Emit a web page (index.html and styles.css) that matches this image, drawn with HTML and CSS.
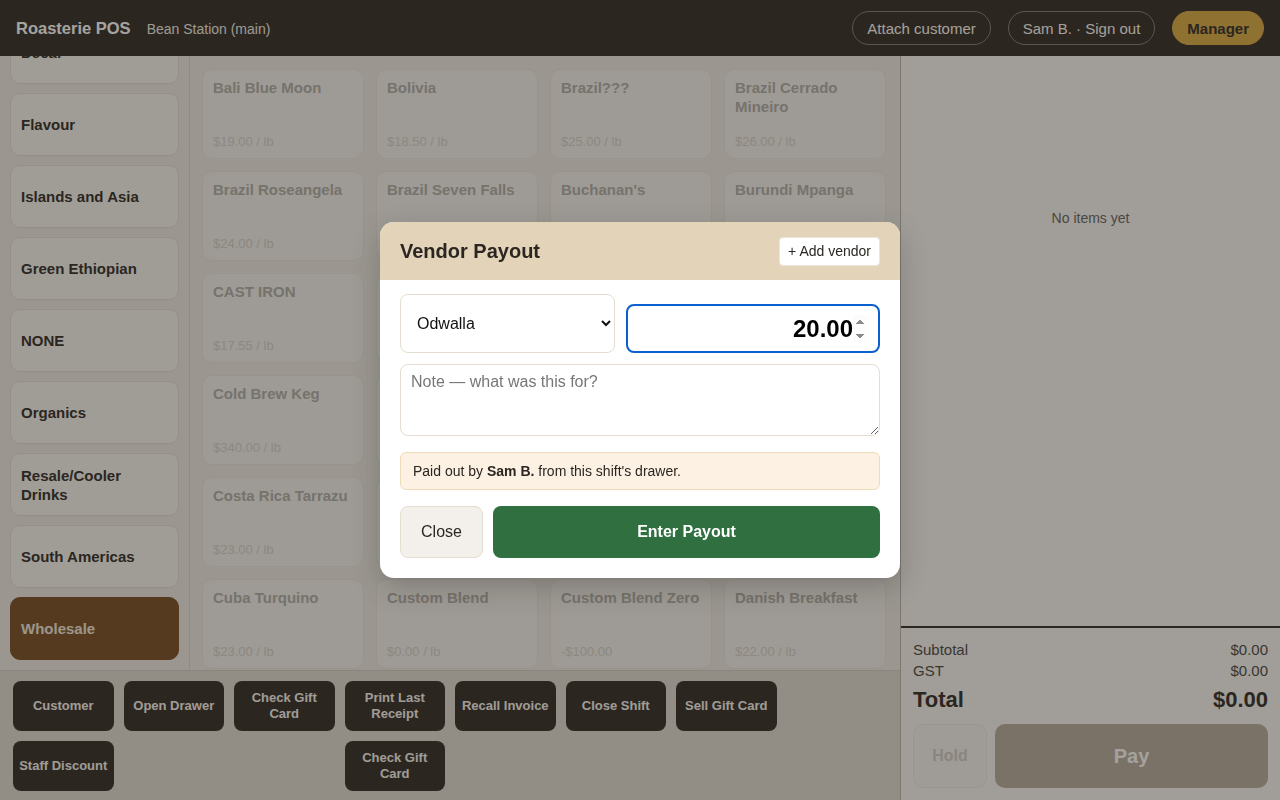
FILE: index.html
```html
<!DOCTYPE html>
<html lang="en">

<head>
    <meta charset="UTF-8">
    <meta name="viewport" content="width=device-width, initial-scale=1.0">
    <title>Roasterie POS</title>
    <link rel="stylesheet" href="styles.css">
</head>

<body>
    <header class="topbar">
        <div class="brand">
            <span class="brand-name">Roasterie POS</span>
            <span class="brand-store">Bean Station (main)</span>
        </div>
        <div class="topbar-actions">
            <button class="pill">Attach customer</button>
            <button class="pill">Sam B. · Sign out</button>
            <button class="pill pill-manager">Manager</button>
        </div>
    </header>

    <div class="main">
        <div class="workspace">
            <div class="browse">
                <nav class="categories" id="categories">
                    <button class="category">Blends</button>
                    <button class="category">Decaf</button>
                    <button class="category">Flavour</button>
                    <button class="category">Islands and Asia</button>
                    <button class="category">Green Ethiopian</button>
                    <button class="category">NONE</button>
                    <button class="category">Organics</button>
                    <button class="category">Resale/Cooler Drinks</button>
                    <button class="category">South Americas</button>
                    <button class="category active">Wholesale</button>
                </nav>

                <section class="products">
                    <div class="product"><span class="product-name">Bali Blue Moon</span><span class="product-price">$19.00 / lb</span></div>
                    <div class="product"><span class="product-name">Bolivia</span><span class="product-price">$18.50 / lb</span></div>
                    <div class="product"><span class="product-name">Brazil???</span><span class="product-price">$25.00 / lb</span></div>
                    <div class="product"><span class="product-name">Brazil Cerrado Mineiro</span><span class="product-price">$26.00 / lb</span></div>

                    <div class="product"><span class="product-name">Brazil Roseangela</span><span class="product-price">$24.00 / lb</span></div>
                    <div class="product"><span class="product-name">Brazil Seven Falls</span><span class="product-price">$22.00 / lb</span></div>
                    <div class="product"><span class="product-name">Buchanan's</span><span class="product-price">$21.00 / lb</span></div>
                    <div class="product"><span class="product-name">Burundi Mpanga</span><span class="product-price">$23.50 / lb</span></div>

                    <div class="product"><span class="product-name">CAST IRON</span><span class="product-price">$17.55 / lb</span></div>
                    <div class="product"><span class="product-name">Chiapas Organic</span><span class="product-price">$22.00 / lb</span></div>
                    <div class="product"><span class="product-name">Cold Brew Blend</span><span class="product-price">$19.00 / lb</span></div>
                    <div class="product"><span class="product-name">Cold Brew Concentrate</span><span class="product-price">$12.00</span></div>

                    <div class="product"><span class="product-name">Cold Brew Keg</span><span class="product-price">$340.00 / lb</span></div>
                    <div class="product"><span class="product-name">Colombia Decaf</span><span class="product-price">$24.00 / lb</span></div>
                    <div class="product"><span class="product-name">Colombia Huila</span><span class="product-price">$21.00 / lb</span></div>
                    <div class="product"><span class="product-name">Congo Kivu</span><span class="product-price">$25.00 / lb</span></div>

                    <div class="product"><span class="product-name">Costa Rica Tarrazu</span><span class="product-price">$23.00 / lb</span></div>
                    <div class="product"><span class="product-name">Costa Rica Tres Rios</span><span class="product-price">$24.00 / lb</span></div>
                    <div class="product"><span class="product-name">Cowboy Blend</span><span class="product-price">$18.00 / lb</span></div>
                    <div class="product"><span class="product-name">Cuba Serrano</span><span class="product-price">$26.00 / lb</span></div>

                    <div class="product"><span class="product-name">Cuba Turquino</span><span class="product-price">$23.00 / lb</span></div>
                    <div class="product"><span class="product-name">Custom Blend</span><span class="product-price">$0.00 / lb</span></div>
                    <div class="product"><span class="product-name">Custom Blend Zero</span><span class="product-price">-$100.00</span></div>
                    <div class="product"><span class="product-name">Danish Breakfast</span><span class="product-price">$22.00 / lb</span></div>
                </section>
            </div>

            <div class="actions">
                <button class="action">Customer</button>
                <button class="action">Open Drawer</button>
                <button class="action">Check Gift Card</button>
                <button class="action">Print Last Receipt</button>
                <button class="action">Recall Invoice</button>
                <button class="action">Close Shift</button>
                <button class="action">Sell Gift Card</button>
                <button class="action action-row2">Staff Discount</button>
                <button class="action action-col4">Check Gift Card</button>
            </div>
        </div>

        <aside class="cart">
            <div class="cart-items">
                <p class="cart-empty">No items yet</p>
            </div>
            <div class="totals">
                <div class="total-row"><span>Subtotal</span><span>$0.00</span></div>
                <div class="total-row"><span>GST</span><span>$0.00</span></div>
                <div class="total-row grand"><span>Total</span><span>$0.00</span></div>
                <div class="cart-buttons">
                    <button class="hold">Hold</button>
                    <button class="pay">Pay</button>
                </div>
            </div>
        </aside>
    </div>

    <div class="overlay"></div>

    <div class="modal-wrap">
        <div class="modal">
            <div class="modal-header">
                <h2>Vendor Payout</h2>
                <button class="add-vendor">+ Add vendor</button>
            </div>
            <div class="modal-body">
                <div class="payout-row">
                    <select class="vendor-select">
                        <option>Odwalla</option>
                        <option>Sysco</option>
                        <option>Costco</option>
                    </select>
                    <input class="amount" id="amount" type="number" step="0.01" value="20.00">
                </div>
                <textarea class="note" rows="3" placeholder="Note — what was this for?"></textarea>
                <p class="notice">Paid out by <b>Sam B.</b> from this shift's drawer.</p>
                <div class="modal-buttons">
                    <button class="btn-close">Close</button>
                    <button class="btn-payout">Enter Payout</button>
                </div>
            </div>
        </div>
    </div>

    <script>
        document.getElementById('categories').scrollTop = 117;
        document.getElementById('amount').focus({ preventScroll: true });
    </script>
</body>

</html>
```

FILE: styles.css
```css
* {
    box-sizing: border-box;
}

body {
    font-family: "Liberation Sans", Arial, sans-serif;
    background-color: #eeebe5;
    color: #342f2b;
    margin: 0;
    height: 100vh;
    display: flex;
    flex-direction: column;
    overflow: hidden;
}

button {
    font-family: inherit;
    cursor: pointer;
}

/* top bar */

.topbar {
    height: 56px;
    flex-shrink: 0;
    background-color: #342f2b;
    display: flex;
    align-items: center;
    justify-content: space-between;
    padding: 0 16px;
}

.brand {
    display: flex;
    align-items: baseline;
    gap: 16px;
}

.brand-name {
    color: #fff;
    font-weight: bold;
    font-size: 16.5px;
}

.brand-store {
    color: #f2ede4;
    font-size: 14px;
}

.topbar-actions {
    display: flex;
    gap: 17px;
}

.pill {
    height: 34px;
    padding: 0 14px;
    border-radius: 17px;
    border: 1px solid #857f78;
    background: transparent;
    color: #fffaf2;
    font-size: 15px;
}

.pill-manager {
    background-color: #daac47;
    border-color: #daac47;
    color: #342f2b;
    font-weight: bold;
}

/* main area */

.main {
    flex: 1;
    display: flex;
    min-height: 0;
}

.workspace {
    flex: 1;
    display: flex;
    flex-direction: column;
    min-width: 0;
}

.browse {
    flex: 1;
    display: flex;
    min-height: 0;
}

.categories {
    width: 190px;
    flex-shrink: 0;
    border-right: 1px solid #dad6ce;
    padding: 10px;
    display: flex;
    flex-direction: column;
    gap: 9px;
    overflow-y: auto;
    scrollbar-width: none;
}

.category {
    flex-shrink: 0;
    height: 63px;
    padding: 0 10px;
    text-align: left;
    font-size: 15px;
    font-weight: bold;
    line-height: 19px;
    color: #342f2b;
    background-color: #f7f5f1;
    border: 1px solid #e6dccd;
    border-radius: 10px;
}

.category.active {
    background-color: #7a5128;
    border-color: #7a5128;
    color: #f0e8dc;
}

.products {
    flex: 1;
    padding: 13px 12px;
    display: grid;
    grid-template-columns: repeat(4, 162px);
    grid-auto-rows: 90px;
    gap: 12px;
    overflow: hidden;
    align-content: start;
}

.product {
    background-color: #f4f2ee;
    border: 1px solid #e9e5de;
    border-radius: 10px;
    padding: 8px 10px 9px;
    display: flex;
    flex-direction: column;
    justify-content: space-between;
}

.product-name {
    font-size: 15px;
    font-weight: bold;
    line-height: 19px;
    color: #b1aea8;
}

.product-price {
    font-size: 13px;
    color: #d4d1cb;
}

/* quick actions */

.actions {
    height: 130px;
    flex-shrink: 0;
    background-color: #dfdbd3;
    border-top: 1px solid #d2cec6;
    padding: 10px 13px;
    display: grid;
    grid-template-columns: repeat(8, 1fr);
    grid-auto-rows: 50px;
    gap: 10px;
}

.action {
    background-color: #342f2b;
    color: #f8f4ee;
    border: none;
    border-radius: 8px;
    font-size: 13px;
    font-weight: bold;
    line-height: 16px;
    padding: 0 6px;
}

.action-row2 {
    grid-column: 1;
}

.action-col4 {
    grid-column: 4;
}

/* cart */

.cart {
    width: 380px;
    flex-shrink: 0;
    background-color: #f8f7f3;
    border-left: 1px solid #bcb6af;
    display: flex;
    flex-direction: column;
}

.cart-items {
    flex: 1;
    padding-top: 154px;
}

.cart-empty {
    margin: 0;
    text-align: center;
    font-size: 14px;
    color: #696662;
}

.totals {
    border-top: 2px solid #342f2b;
    padding: 11px 12px 12px;
}

.total-row {
    display: flex;
    justify-content: space-between;
    font-size: 15px;
    line-height: 21px;
    color: #4d4a46;
}

.total-row.grand {
    font-size: 22px;
    font-weight: bold;
    line-height: 30px;
    margin-top: 4px;
    color: #342f2b;
}

.cart-buttons {
    display: flex;
    gap: 8px;
    margin-top: 9px;
}

.hold {
    width: 74px;
    height: 64px;
    background-color: #f5f4f0;
    border: 1px solid #ebe8e3;
    border-radius: 10px;
    font-size: 16px;
    font-weight: bold;
    color: #cfccc9;
}

.pay {
    flex: 1;
    height: 64px;
    background-color: #b7aea1;
    border: none;
    border-radius: 10px;
    font-size: 20px;
    font-weight: bold;
    color: #fffcf8;
}

/* payout dialog */

.overlay {
    position: fixed;
    inset: 0;
    background-color: rgba(30, 24, 18, 0.4);
}

.modal-wrap {
    position: fixed;
    inset: 0;
    display: flex;
    align-items: center;
    justify-content: center;
}

.modal {
    width: 520px;
    background-color: #fff;
    border-radius: 14px;
    overflow: hidden;
    box-shadow: 0 10px 30px rgba(0, 0, 0, 0.2);
}

.modal-header {
    height: 58px;
    background-color: #e3d3b8;
    display: flex;
    align-items: center;
    justify-content: space-between;
    padding: 0 20px;
}

.modal-header h2 {
    margin: 0;
    font-size: 20px;
    color: #2b2621;
}

.add-vendor {
    height: 29px;
    padding: 0 8px;
    background-color: #fff;
    border: 1px solid #eee6d8;
    border-radius: 4px;
    font-size: 14px;
    color: #2b2621;
}

.modal-body {
    padding: 14px 20px 20px;
}

.payout-row {
    display: grid;
    grid-template-columns: 215px minmax(0, 1fr);
    gap: 11px;
    align-items: end;
}

.vendor-select {
    height: 59px;
    padding: 0 12px;
    font-family: inherit;
    font-size: 16px;
    color: #111;
    background-color: #fff;
    border: 1px solid #e5ddd0;
    border-radius: 8px;
}

.amount {
    width: 100%;
    min-width: 0;
    height: 49px;
    padding: 0 10px;
    font-family: inherit;
    font-size: 24px;
    font-weight: bold;
    text-align: right;
    color: #000;
    border: 2px solid #0b5fcf;
    border-radius: 8px;
}

.amount:focus {
    outline: none;
}

.note {
    display: block;
    width: 100%;
    height: 72px;
    margin-top: 11px;
    padding: 8px 10px;
    font-family: inherit;
    font-size: 16px;
    border: 1px solid #e5ddd0;
    border-radius: 8px;
    resize: vertical;
}

.note::placeholder {
    color: #777;
}

.notice {
    margin: 16px 0 0;
    padding: 0 12px;
    font-size: 14px;
    line-height: 36px;
    color: #2b2621;
    background-color: #fcf1e2;
    border: 1px solid #f1dcba;
    border-radius: 6px;
}

.modal-buttons {
    display: flex;
    gap: 10px;
    margin-top: 16px;
}

.btn-close {
    width: 83px;
    height: 52px;
    background-color: #f3efea;
    border: 1px solid #e5ddd0;
    border-radius: 8px;
    font-size: 16px;
    color: #2b2621;
}

.btn-payout {
    flex: 1;
    height: 52px;
    background-color: #2f6f40;
    border: none;
    border-radius: 8px;
    font-size: 16px;
    font-weight: bold;
    color: #fff;
}
```
